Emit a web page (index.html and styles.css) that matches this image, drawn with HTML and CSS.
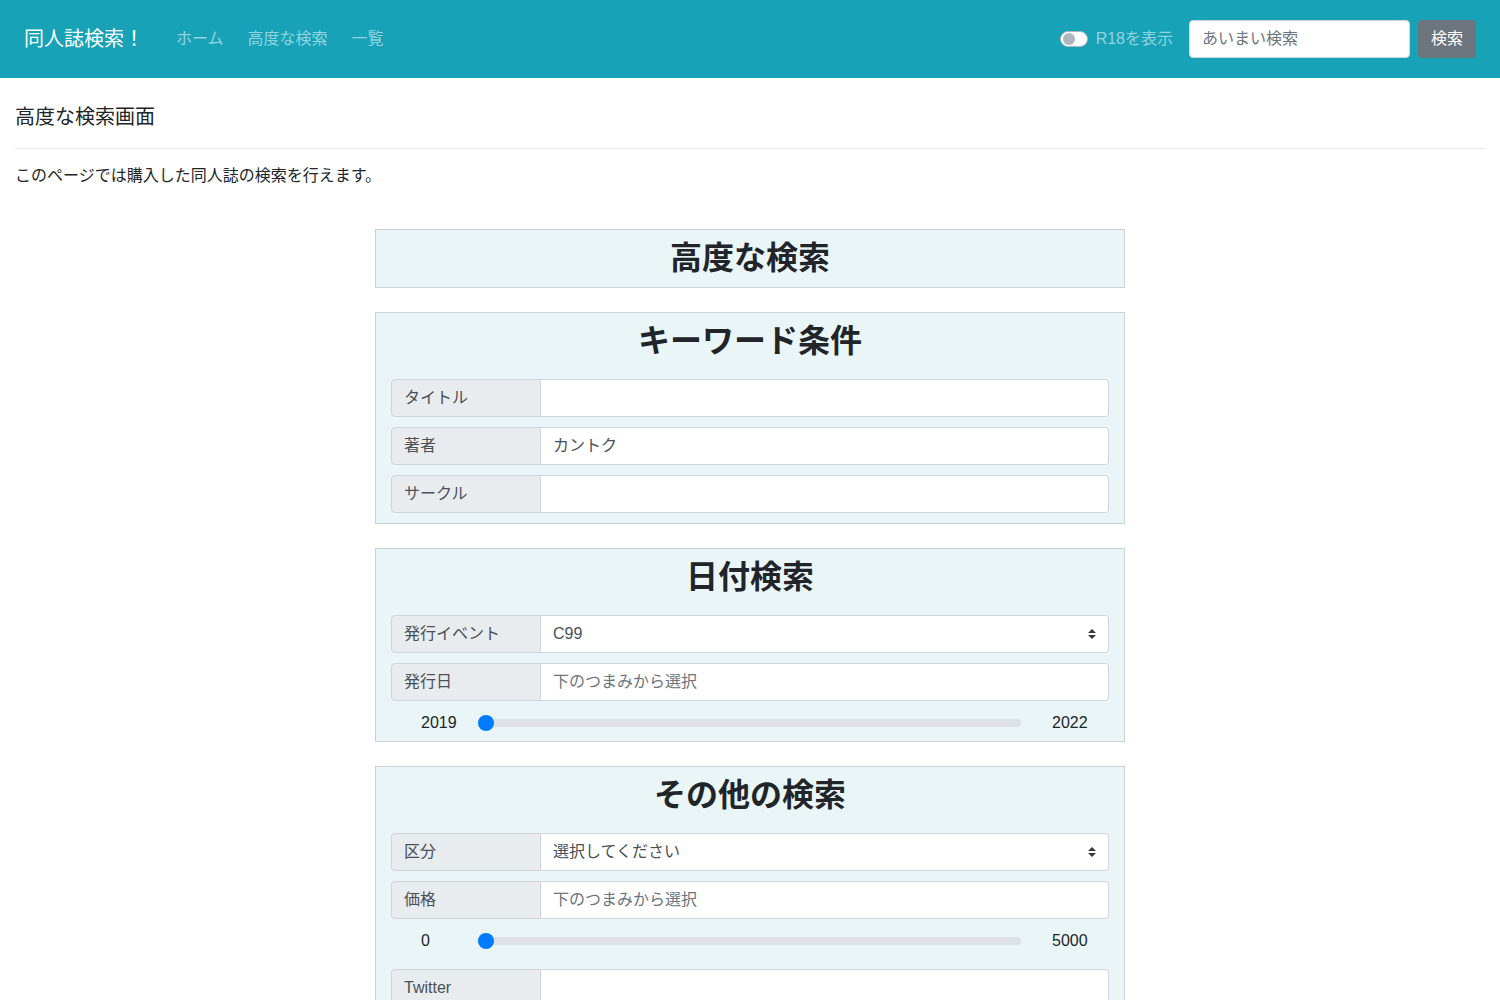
FILE: index.html
```html
<!DOCTYPE html>
<html lang="ja">
<head>
<meta charset="utf-8">
<title>高度な検索</title>
<link rel="stylesheet" href="styles.css">
</head>
<body>
<nav class="navbar">
  <div class="nav-left">
    <a class="brand">同人誌検索！</a>
    <a class="nav-link">ホーム</a>
    <a class="nav-link">高度な検索</a>
    <a class="nav-link">一覧</a>
  </div>
  <div class="nav-right">
    <label class="switch"><span class="switch-track"><span class="switch-knob"></span></span><span class="switch-label">R18を表示</span></label>
    <div class="nav-search">あいまい検索</div>
    <div class="nav-btn">検索</div>
  </div>
</nav>

<main class="container">
  <h5 class="page-title">高度な検索画面</h5>
  <hr class="divider">
  <p class="lead-text">このページでは購入した同人誌の検索を行えます。</p>

  <section class="card card-title-only">
    <h2 class="card-heading">高度な検索</h2>
  </section>

  <section class="card">
    <h2 class="card-heading">キーワード条件</h2>
    <div class="card-body">
      <div class="input-group"><div class="ig-label">タイトル</div><div class="ig-input"></div></div>
      <div class="input-group"><div class="ig-label">著者</div><div class="ig-input">カントク</div></div>
      <div class="input-group"><div class="ig-label">サークル</div><div class="ig-input"></div></div>
    </div>
  </section>

  <section class="card">
    <h2 class="card-heading">日付検索</h2>
    <div class="card-body">
      <div class="input-group"><div class="ig-label">発行イベント</div><div class="ig-input ig-select">C99<svg class="select-arrow" viewBox="0 0 8 10" width="8" height="10"><path d="M4 0 L8 4 H0 Z M4 10 L0 6 H8 Z" fill="#343a40"/></svg></div></div>
      <div class="input-group"><div class="ig-label">発行日</div><div class="ig-input placeholder">下のつまみから選択</div></div>
      <div class="range-row range-row-end">
        <div class="range-min">2019</div>
        <div class="range"><span class="range-thumb"></span></div>
        <div class="range-max">2022</div>
      </div>
    </div>
  </section>

  <section class="card">
    <h2 class="card-heading">その他の検索</h2>
    <div class="card-body">
      <div class="input-group"><div class="ig-label">区分</div><div class="ig-input ig-select">選択してください<svg class="select-arrow" viewBox="0 0 8 10" width="8" height="10"><path d="M4 0 L8 4 H0 Z M4 10 L0 6 H8 Z" fill="#343a40"/></svg></div></div>
      <div class="input-group"><div class="ig-label">価格</div><div class="ig-input placeholder">下のつまみから選択</div></div>
      <div class="range-row range-row-mid">
        <div class="range-min">0</div>
        <div class="range"><span class="range-thumb"></span></div>
        <div class="range-max">5000</div>
      </div>
      <div class="input-group"><div class="ig-label">Twitter</div><div class="ig-input"></div></div>
    </div>
  </section>
</main>
</body>
</html>
```

FILE: styles.css
```css
* { box-sizing: border-box; }

html, body {
  margin: 0;
  padding: 0;
}

body {
  font-family: "Liberation Sans", "Noto Sans CJK JP", sans-serif;
  font-size: 16px;
  line-height: 1.5;
  color: #212529;
  background: #fff;
}

.navbar {
  height: 78px;
  background: #17a2b8;
  display: flex;
  align-items: center;
  justify-content: space-between;
  padding: 0 24px;
}

.nav-left {
  display: flex;
  align-items: center;
}

.brand {
  color: #fff;
  font-size: 20px;
  line-height: 30px;
  margin-right: 32px;
}

.nav-link {
  color: rgba(255, 255, 255, 0.55);
  font-size: 16px;
  line-height: 24px;
  margin-right: 24px;
}

.nav-right {
  display: flex;
  align-items: center;
}

.switch {
  display: flex;
  align-items: center;
  margin-right: 16px;
}

.switch-track {
  width: 28px;
  height: 16px;
  border-radius: 8px;
  background: #fff;
  border: 1px solid #adb5bd;
  display: flex;
  align-items: center;
  padding-left: 2px;
  margin-right: 8px;
}

.switch-knob {
  width: 12px;
  height: 12px;
  border-radius: 50%;
  background: #adb5bd;
}

.switch-label {
  color: rgba(255, 255, 255, 0.55);
  font-size: 16px;
  line-height: 24px;
}

.nav-search {
  width: 221px;
  height: 38px;
  background: #fff;
  border: 1px solid #ced4da;
  border-radius: 4px;
  padding: 6px 12px;
  font-size: 16px;
  line-height: 24px;
  color: #6c757d;
  margin-right: 8px;
}

.nav-btn {
  width: 58px;
  height: 38px;
  background: #6c757d;
  border-radius: 4px;
  color: #fff;
  font-size: 16px;
  line-height: 38px;
  text-align: center;
}

.container {
  padding: 0 15px 40px;
}

.page-title {
  font-size: 20px;
  font-weight: 400;
  line-height: 24px;
  margin: 27px 0 0;
}

.divider {
  border: 0;
  border-top: 1px solid #e5e7e9;
  margin: 19px 0 0;
}

.lead-text {
  font-size: 16px;
  line-height: 24px;
  margin: 15px 0 0;
}

.card {
  width: 750px;
  margin: 0 auto 24px;
  background: #eaf5f7;
  border: 1px solid #c9d2d6;
}

.card-title-only {
  margin-top: 41px;
}

.card-heading {
  margin: 0;
  padding: 9px 0 10px;
  text-align: center;
  font-size: 32px;
  font-weight: 700;
  line-height: 38px;
  color: #212529;
}

.card-body {
  padding: 9px 15px 0;
}

.input-group {
  display: flex;
  height: 38px;
  margin-bottom: 10px;
}

.ig-label {
  width: 150px;
  background: #e9ecef;
  border: 1px solid #ced4da;
  border-radius: 4px 0 0 4px;
  padding: 6px 12px;
  color: #495057;
  font-size: 16px;
  line-height: 24px;
}

.ig-input {
  flex: 1;
  background: #fff;
  border: 1px solid #ced4da;
  border-left: 0;
  border-radius: 0 4px 4px 0;
  padding: 6px 12px;
  color: #495057;
  font-size: 16px;
  line-height: 24px;
  display: flex;
  align-items: center;
  justify-content: space-between;
}

.ig-input.placeholder {
  color: #6c757d;
}

.range-row {
  display: flex;
  align-items: center;
  height: 23px;
  padding-top: 1px;
}

.range-row-end {
  margin-bottom: 7px;
}

.range-row-mid {
  margin-bottom: 17px;
}

.range-min {
  width: 87px;
  padding-left: 30px;
  font-size: 16px;
  line-height: 22px;
  color: #212529;
}

.range {
  width: 543px;
  height: 8px;
  background: #dee2e6;
  border-radius: 8px;
  display: flex;
  align-items: center;
}

.range-thumb {
  width: 16px;
  height: 16px;
  border-radius: 50%;
  background: #007bff;
}

.range-max {
  flex: 1;
  padding-left: 31px;
  font-size: 16px;
  line-height: 22px;
  color: #212529;
}
```
